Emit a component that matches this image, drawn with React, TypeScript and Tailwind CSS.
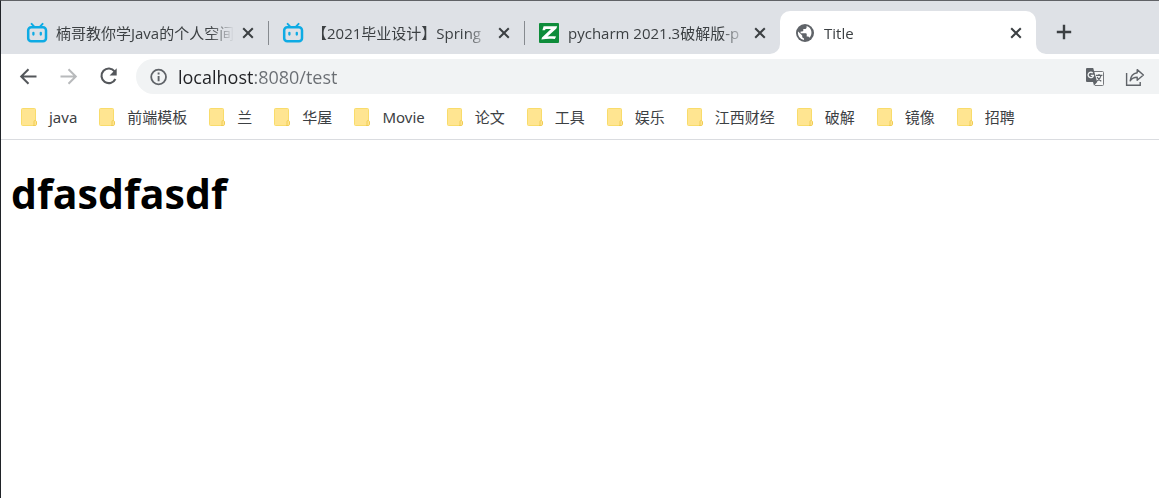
import type { ReactNode } from "react";

function BiliIcon() {
  return (
    <svg viewBox="0 0 22 22" className="size-[22px]" fill="none" stroke="#0eabe4" strokeLinecap="round" aria-hidden="true">
      <path d="M5.6 1.9 8.2 4.6M16.6 1.9 14 4.6" strokeWidth="2" />
      <rect x="2.2" y="5.2" width="17.8" height="14" rx="3" strokeWidth="2.5" />
      <path d="M7.4 10.8v1.8M14.8 10.8v1.8" strokeWidth="2.3" />
    </svg>
  );
}

function ZIcon() {
  return (
    <svg viewBox="0 0 22 22" className="size-[22px]" aria-hidden="true">
      <rect x="1" y="1" width="20" height="20" rx="1" fill="#0e8c3a" />
      <path d="M5.6 4.2h13.6l-.8 2.2-8.9 8.2c2.4-.6 5.6-.5 8.6-.1l-1.3 2.6c-4.5-.6-8.4-.4-13.4.5l.6-2.2L13 6.9H8.6c-.9 0-1.4.4-1.8 1.4H4.4z" fill="#fff" />
    </svg>
  );
}

function GlobeIcon() {
  return (
    <svg viewBox="0 0 22 22" className="size-[22px]" aria-hidden="true">
      <circle cx="11" cy="11" r="9" fill="#5f6368" />
      <path
        d="M12.6 3.9v1.3c0 1-.8 1.8-1.8 1.8H9.3v1.6c0 .5-.4.9-.9.9H6.6v1.7h5.2c.5 0 .9.4.9.9v2.4h.9c.8 0 1.5.5 1.7 1.2a7.1 7.1 0 0 0-2.7-11.8z M4.1 9.4A7.1 7.1 0 0 0 10 18v-1.7c-1 0-1.8-.8-1.8-1.8v-.9z"
        fill="#fff"
      />
    </svg>
  );
}

function CloseIcon() {
  return (
    <svg viewBox="0 0 12 12" className="size-3" fill="none" stroke="#3c4043" strokeWidth="2" aria-hidden="true">
      <path d="m1.2 1.2 9.6 9.6M10.8 1.2 1.2 10.8" />
    </svg>
  );
}

function TabFoot({ side }: { side: "left" | "right" }) {
  return (
    <svg
      viewBox="0 0 10 10"
      className={side === "left" ? "absolute -left-2.5 bottom-0 size-2.5" : "absolute -right-2.5 bottom-0 size-2.5"}
      aria-hidden="true"
    >
      <path d={side === "left" ? "M10 0v10H0A10 10 0 0 0 10 0z" : "M0 0v10h10A10 10 0 0 1 0 0z"} fill="#fff" />
    </svg>
  );
}

type TabData = { title: string; icon: ReactNode; active?: boolean; divider?: boolean };

const tabs: TabData[] = [
  { title: "楠哥教你学Java的个人空间", icon: <BiliIcon />, divider: true },
  { title: "【2021毕业设计】Spring", icon: <BiliIcon />, divider: true },
  { title: "pycharm 2021.3破解版-p", icon: <ZIcon /> },
  { title: "Title", icon: <GlobeIcon />, active: true },
];

function Tab({ title, icon, active, divider }: TabData) {
  return (
    <div
      className={
        active
          ? "relative flex h-[43px] w-64 min-w-0 items-center rounded-t-[10px] bg-white px-3.5"
          : "relative flex h-[43px] w-64 min-w-0 items-center px-3.5"
      }
    >
      {active && <TabFoot side="left" />}
      {active && <TabFoot side="right" />}
      <button
        type="button"
        role="tab"
        aria-selected={!!active}
        className="flex min-w-0 flex-1 items-center gap-2 text-left text-[15px] leading-6 text-[#3c4043]"
      >
        <span className="shrink-0">{icon}</span>
        <span className="min-w-0 flex-1 overflow-hidden whitespace-nowrap [mask-image:linear-gradient(to_right,black_calc(100%-24px),transparent)]">
          {title}
        </span>
      </button>
      <button type="button" aria-label={`Close ${title}`} className="ml-2 shrink-0">
        <CloseIcon />
      </button>
      {divider && <span className="absolute -right-px top-2.5 h-6 w-px bg-[#868a8f]" />}
    </div>
  );
}

function FolderIcon() {
  return (
    <svg viewBox="0 0 16 20" className="h-5 w-4 shrink-0" aria-hidden="true">
      <rect x="0.5" y="1.5" width="14" height="17" rx="1" fill="#ffe591" stroke="#f9dc6b" />
      <path d="M13.9 13.5c1 0 1.6.5 1.6 1.5v2.3c0 .8-.6 1.2-1.3 1.2h-2c1 0 .8-.8.8-1.5v-2.3c0-.7.3-1.2.9-1.2z" fill="#ffe591" stroke="#f0cd55" />
    </svg>
  );
}

const bookmarks = ["java", "前端模板", "兰", "华屋", "Movie", "论文", "工具", "娱乐", "江西财经", "破解", "镜像", "招聘"];

export default function App() {
  return (
    <div className="min-h-screen border-t border-l border-t-[#606266] border-l-[#202328] bg-white font-['Open_Sans','Noto_Sans_CJK_SC',sans-serif]">
      <header>
        <div className="flex items-end bg-[#dee1e6] pt-2.5 pl-[11px]">
          <div role="tablist" className="flex min-w-0">
            {tabs.map((tab) => (
              <Tab key={tab.title} {...tab} />
            ))}
          </div>
          <button type="button" aria-label="New tab" className="mb-3 ml-[18px] flex size-5 shrink-0 items-center justify-center">
            <svg viewBox="0 0 16 16" className="size-4" stroke="#3c4043" strokeWidth="2.4" aria-hidden="true">
              <path d="M8 .8v14.4M.8 8h14.4" />
            </svg>
          </button>
        </div>

        <div className="flex items-center pt-[5px] pl-[17px]">
          <div className="flex shrink-0 gap-4">
            <button type="button" aria-label="Back" className="size-6">
              <svg viewBox="0 0 24 24" className="size-6" fill="none" stroke="#54575b" strokeWidth="2" aria-hidden="true">
                <path d="M18.5 11.5H3.5M10.5 4.2 3.2 11.5l7.3 7.3" />
              </svg>
            </button>
            <button type="button" aria-label="Forward" className="size-6" disabled>
              <svg viewBox="0 0 24 24" className="size-6" fill="none" stroke="#b8babc" strokeWidth="2" aria-hidden="true">
                <path d="M2.5 11.5h15M10.5 4.2l7.3 7.3-7.3 7.3" />
              </svg>
            </button>
            <button type="button" aria-label="Reload" className="size-6">
              <svg viewBox="0 0 24 24" className="size-6" fill="none" stroke="#54575b" strokeWidth="2.1" aria-hidden="true">
                <path d="M16.6 6.4A7.3 7.3 0 1 0 17.4 14" />
                <path d="M18.7 3.3v7.1h-7.1z" fill="#54575b" stroke="none" />
              </svg>
            </button>
          </div>
          <div className="ml-3.5 flex h-[35px] min-w-0 flex-1 items-center rounded-l-full bg-[#f1f3f4] px-3.5">
            <svg viewBox="0 0 18 18" className="size-[18px] shrink-0" aria-hidden="true">
              <circle cx="8.6" cy="9" r="7.4" fill="none" stroke="#5f6368" strokeWidth="1.8" />
              <path d="M8.6 4.6v2M8.6 8v5.2" stroke="#5f6368" strokeWidth="1.9" />
            </svg>
            <input
              type="text"
              aria-label="Address"
              defaultValue="localhost:8080/test"
              className="ml-2.5 min-w-0 flex-1 bg-linear-[to_right,#202124_75px,#6a6e73_75px] bg-clip-text text-[18px] leading-7 text-transparent caret-black outline-none"
            />
            <button type="button" aria-label="Translate" className="ml-2 size-5 shrink-0">
              <svg viewBox="0 0 20 20" className="size-5" aria-hidden="true">
                <path d="M8 4.5h9.5a1 1 0 0 1 1 1v12a1 1 0 0 1-1 1H10" fill="#f7f8f8" stroke="#77797d" />
                <path d="M2 1h6.2l4 14H2a1 1 0 0 1-1-1V2a1 1 0 0 1 1-1z" fill="#5f6368" />
                <path d="M12.2 15 9 18.8 8 15z" fill="#5f6368" />
                <path d="M7.8 6.1A2.7 2.7 0 1 0 8.5 8.4H5.8" fill="none" stroke="#f1f3f4" strokeWidth="1.3" />
                <path d="M11 8.3h6.4M14 7v1.3M16 8.5c-.5 2.6-1.8 4.2-3.8 5.6M12.1 9.9c.9 1.8 2.2 3.1 4.2 4.4" fill="none" stroke="#5f6368" strokeWidth="1.2" />
              </svg>
            </button>
            <button type="button" aria-label="Share" className="ml-5 size-5 shrink-0">
              <svg viewBox="0 0 20 20" className="size-5" fill="none" stroke="#5f6368" strokeWidth="1.4" aria-hidden="true">
                <path d="M1.6 6v12.2h13.6V15" />
                <path d="M12.2 2.6 18.4 8l-6.2 5.2v-3c-3.2 0-5.4 1.1-7 3.6.4-4.3 2.8-7.4 7-8.1z" strokeLinejoin="round" />
              </svg>
            </button>
          </div>
        </div>

        <nav
          aria-label="Bookmarks"
          className="flex gap-[22px] overflow-hidden border-b border-[#dadce0] pt-[11px] pb-2.5 pl-5 font-['Noto_Sans','Noto_Sans_CJK_SC',sans-serif]"
        >
          {bookmarks.map((name) => (
            <a key={name} href="#" className="flex h-6 shrink-0 items-center gap-3 text-[15px] leading-6 text-[#3c4043]">
              <FolderIcon />
              <span>{name}</span>
            </a>
          ))}
        </nav>
      </header>

      <main className="px-2.5 pt-6">
        <h1 className="text-[41px] leading-[58px] font-bold text-black">dfasdfasdf</h1>
      </main>
    </div>
  );
}
